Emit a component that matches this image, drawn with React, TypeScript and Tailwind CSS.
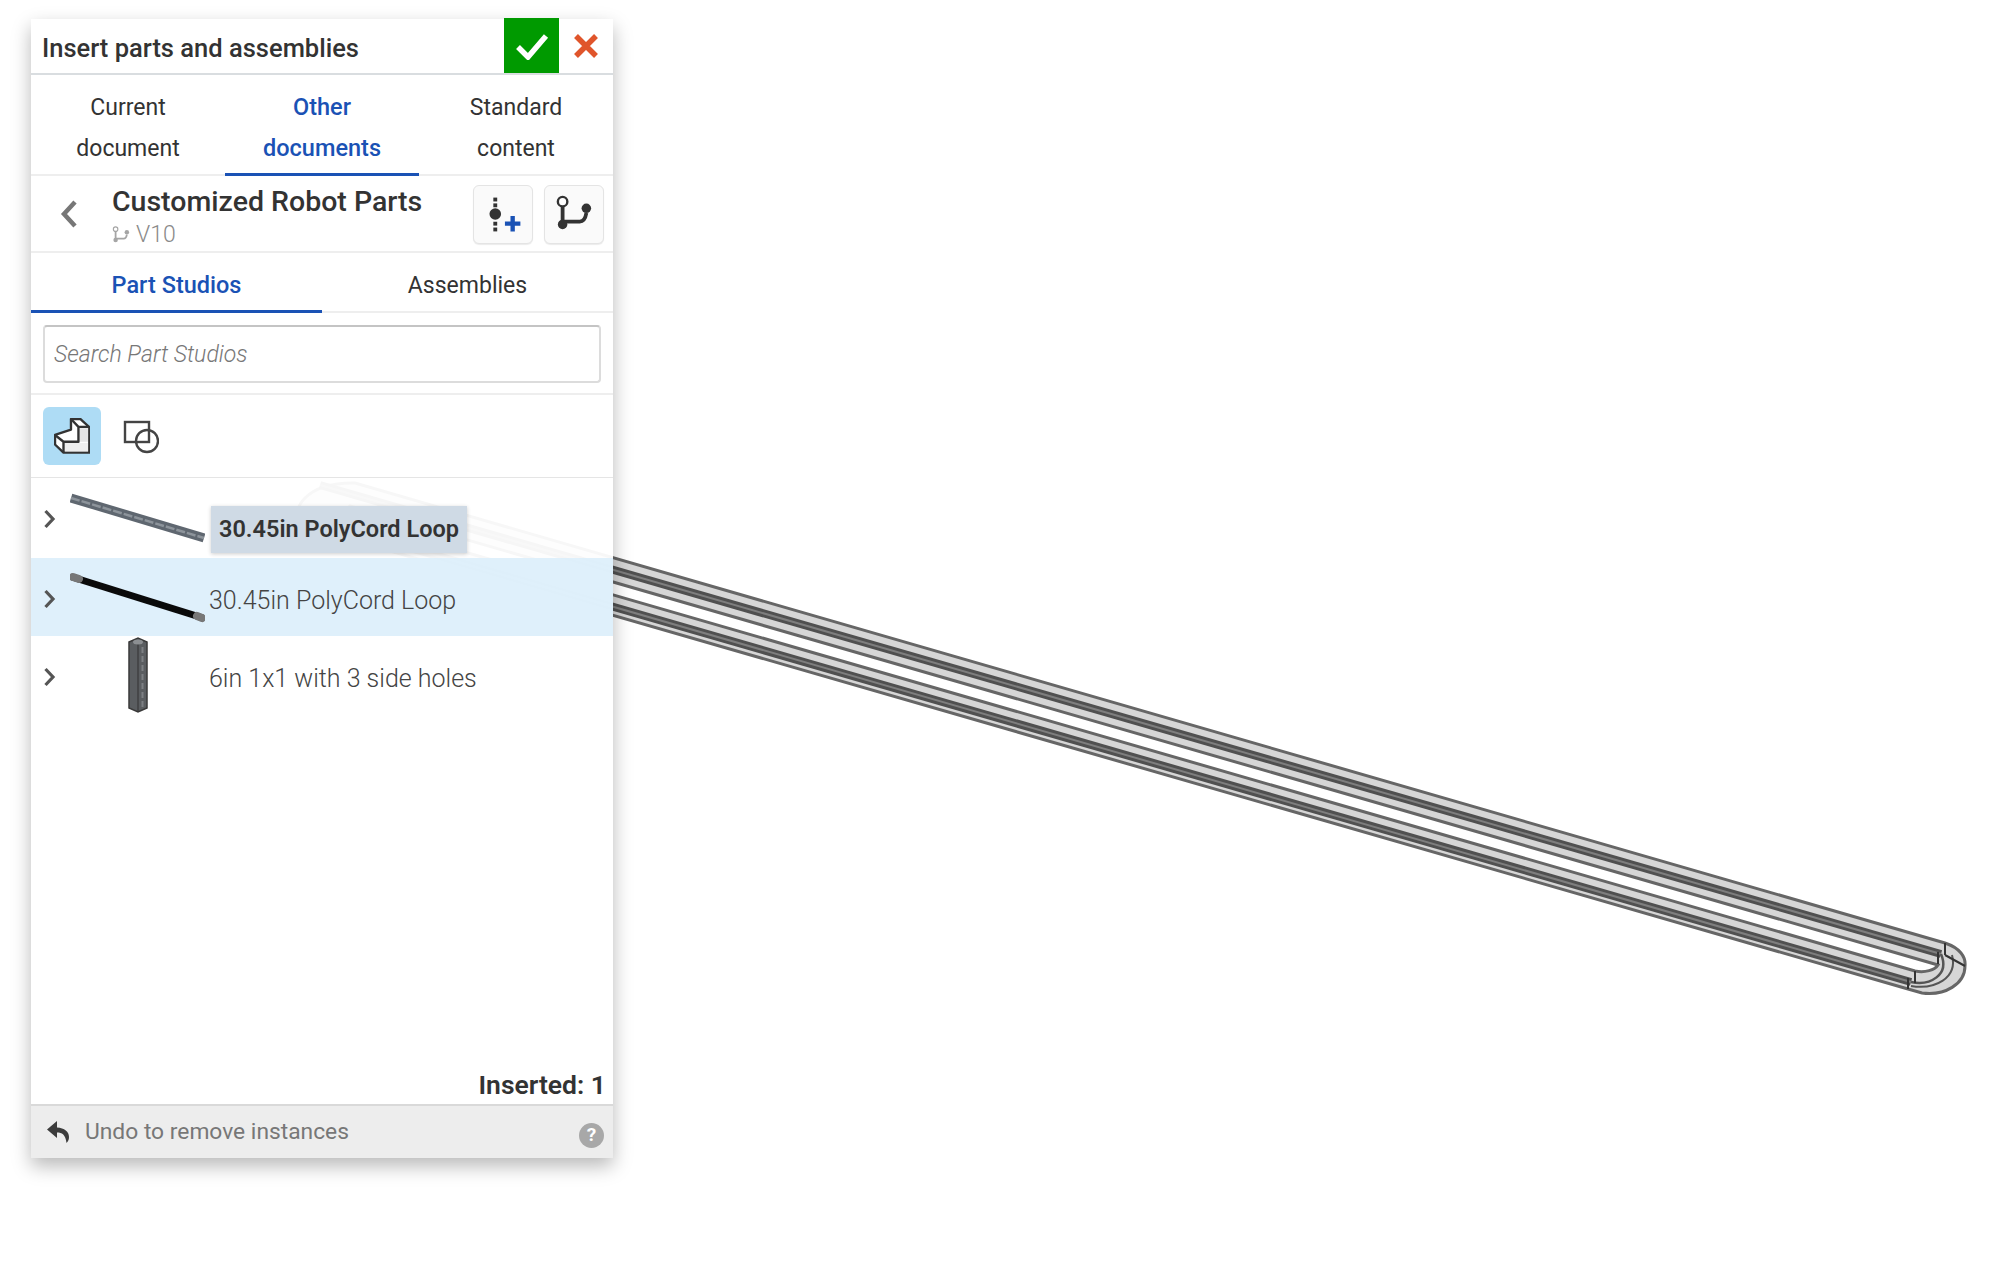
import React from "react";

const BLUE = "text-[#1a52b5]";

const Chevron = () => (
  <svg width="13" height="20" viewBox="0 0 13 20" fill="none">
    <path d="M2.5 2l7.5 8-7.5 8" stroke="#555" strokeWidth="3.2" />
  </svg>
);

const Branch = ({ stroke, size }: { stroke: string; size: number }) => (
  <svg width={size} height={size} viewBox="0 0 40 40" fill="none">
    <circle cx="8" cy="7" r="5" fill="#fff" stroke={stroke} strokeWidth="2.5" />
    <path d="M8 12v20M8 28h18c4 0 6-3 7-9" stroke={stroke} strokeWidth="4" />
    <circle cx="8" cy="31" r="5" fill={stroke} />
    <circle cx="33" cy="14" r="5" fill={stroke} />
  </svg>
);

const Robot = () => (
  <svg className="absolute inset-0" width="1999" height="1284" viewBox="0 0 1999 1284" fill="none">
    {/* the loop, it runs under the panel so it ghosts through */}
    <path
      d="M355 483L1945 943C1960 948 1966 957 1965 966C1965 984 1945 996 1922 993L1908 989L300 525C290 510 305 482 355 483Z"
      fill="#d6d6d6"
      stroke="#666"
      strokeWidth="3"
    />
    <path d="M340 516L1915 971C1925 973 1935 970 1938 965L350 506Z" fill="#fff" stroke="#666" strokeWidth="3" />
    <path d="M320 485L1941 954" stroke="#505050" strokeWidth="8" />
    <path d="M320 485L1941 954" stroke="#7e7e7e" strokeWidth="2" />
    <path d="M320 522L1911 982" stroke="#505050" strokeWidth="8" />
    <path d="M320 522L1911 982" stroke="#7e7e7e" strokeWidth="2" />
    <path d="M1911 982C1930 986 1950 975 1941 954" stroke="#555" strokeWidth="2.5" />
    <path d="M1911 986C1935 990 1958 978 1952 955" stroke="#555" strokeWidth="2" />
    <path d="M1945 943V955M1938 952V964M1915 971V983M1908 978V989M1945 955L1965 966" stroke="#333" strokeWidth="2" />
  </svg>
);

const StudioIcon = () => (
  <svg width="36" height="36" viewBox="0 0 106 106" fill="none" stroke="#333" strokeWidth="7" strokeLinejoin="round">
    <path d="M50 3H78L104 27V102H28L3 78V50L50 34Z" fill="#fff" />
    <path d="M32 73H100V98H32Z" fill="#eee" stroke="none" />
    <path d="M76 30H100V70H76Z" fill="#e4e4e4" stroke="none" />
    <path d="M28 102V70H72V26M72 26L50 3M72 26H104M28 70L3 50" />
  </svg>
);

const SketchIcon = () => (
  <svg width="36" height="36" viewBox="0 0 36 36" fill="none" stroke="#444" strokeWidth="2.4">
    <rect x="2" y="4" width="24" height="20" />
    <circle cx="24" cy="23" r="11" />
  </svg>
);

const Row = ({
  active,
  thumb,
  label,
}: {
  active?: boolean;
  thumb?: React.ReactNode;
  label?: string;
}) => (
  <div className={`flex items-center h-[78px] pl-[12px] ${active ? "bg-[#dceefb]/90" : ""}`}>
    <div className={`w-[27px] shrink-0 ${label ? "mt-[3px]" : ""}`}>
      <Chevron />
    </div>
    <div className="w-[135px] h-[78px] shrink-0 flex items-center justify-center">{thumb}</div>
    {label && <span className="ml-[4px] text-[25px] font-light text-[#444] relative top-[4px]">{label}</span>}
  </div>
);

export default function App() {
  return (
    <div className="relative min-h-screen bg-white pl-[31px] pt-[19px] [font-family:Roboto,sans-serif]">
      <Robot />
      <div className="relative flex flex-col w-[582px] h-[1139px] bg-white/95 shadow-[0_8px_18px_rgba(0,0,0,0.28)]">
        {/* header */}
        <div className="flex items-stretch h-[56px] bg-white border-b-2 border-[#d9dde0]">
          <div className="flex-1 flex items-center pl-[11px] pt-[4px] text-[25.5px] font-medium text-[#333]">
            Insert parts and assemblies
          </div>
          <button className="w-[55px] flex items-center justify-center bg-[#009a00] -mt-[1px]">
            <svg width="34" height="28" viewBox="0 0 34 28" fill="none">
              <path d="M3 15l10 10L31 4" stroke="#fff" strokeWidth="5.5" />
            </svg>
          </button>
          <button className="w-[54px] flex items-center justify-center">
            <svg width="26" height="26" viewBox="0 0 26 26" fill="none">
              <path d="M3 3l20 20M23 3L3 23" stroke="#e0552b" strokeWidth="5.5" />
            </svg>
          </button>
        </div>

        {/* source tabs */}
        <div className="grid grid-cols-3 h-[101px] bg-white border-b-2 border-[#eeeeee] text-[23px] leading-[41px] text-center text-[#333]">
          <div className="pt-[12px]">
            Current
            <br />
            document
          </div>
          <div className={`pt-[12px] text-[23.5px] font-medium ${BLUE} border-b-4 border-[#1a52b5] h-[102px]`}>
            Other
            <br />
            documents
          </div>
          <div className="pt-[12px]">
            Standard
            <br />
            content
          </div>
        </div>

        {/* document row */}
        <div className="flex items-center h-[77px] bg-white border-b-2 border-[#eeeeee] pl-[29px] pr-[9px]">
          <svg width="18" height="28" viewBox="0 0 18 28" fill="none">
            <path d="M15 2L4 14l11 12" stroke="#777" strokeWidth="4.5" />
          </svg>
          <div className="ml-[34px] flex-1 pt-[6px]">
            <div className="text-[28.5px] leading-[34px] font-medium text-[#333]">Customized Robot Parts</div>
            <div className="flex items-center gap-[6px] mt-[3px] text-[23px] leading-[26px] font-light text-[#8a8a8a]">
              <Branch stroke="#a5a5a5" size={18} />
              V10
            </div>
          </div>
          <div className="flex gap-[11px] mt-[1px]">
            <button className="w-[60px] h-[59px] rounded-[6px] bg-[#fafafa] border border-[#e4e4e4] shadow-[0_1px_1px_rgba(0,0,0,0.08)]">
              <svg width="58" height="57" viewBox="0 0 60 59">
                <rect x="20" y="12" width="4" height="4" fill="#333" />
                <rect x="20" y="18" width="4" height="4" fill="#333" />
                <circle cx="22" cy="29" r="6" fill="#333" />
                <rect x="20" y="37" width="4" height="4" fill="#333" />
                <rect x="20" y="43" width="4" height="4" fill="#333" />
                <path d="M40 31v16M32 39h16" stroke="#1a52b5" strokeWidth="4.5" />
              </svg>
            </button>
            <button className="w-[60px] h-[59px] rounded-[6px] bg-[#fafafa] border border-[#e4e4e4] shadow-[0_1px_1px_rgba(0,0,0,0.08)] flex items-center justify-center">
              <Branch stroke="#333" size={38} />
            </button>
          </div>
        </div>

        {/* studio / assembly tabs */}
        <div className="grid grid-cols-2 h-[60px] bg-white border-b-2 border-[#eeeeee] text-[23px] text-center">
          <div className={`flex items-center justify-center pt-[8px] text-[23.5px] font-medium ${BLUE} border-b-4 border-[#1a52b5] h-[61px]`}>
            Part Studios
          </div>
          <div className="flex items-center justify-center pt-[5px] text-[#333]">Assemblies</div>
        </div>

        {/* search */}
        <div className="h-[82px] bg-white border-b-2 border-[#eeeeee] px-[12px] pt-[12px]">
          <div className="h-[58px] rounded-[4px] border-2 border-[#dcdcdc] border-t-[#c4c4c4] flex items-center pl-[9px] pt-[3px] text-[23px] italic font-light text-[#777]">
            Search Part Studios
          </div>
        </div>

        {/* filters */}
        <div className="h-[83px] bg-white border-b border-[#e5e5e5] flex items-center pl-[12px] gap-[22px] shrink-0">
          <button className="w-[58px] h-[58px] rounded-[6px] bg-[#aedcf5] flex items-center justify-center">
            <StudioIcon />
          </button>
          <SketchIcon />
        </div>

        {/* list */}
        <div className="relative flex-1">
          <div className="h-[2px]" />
          <Row
            thumb={
              <svg width="135" height="78" viewBox="0 0 135 78" fill="none">
                <path d="M1 18L134 58" stroke="#5f6770" strokeWidth="9" />
                <path d="M1 18L134 58" stroke="#8d949b" strokeWidth="2.5" strokeDasharray="9 2" />
              </svg>
            }
          />
          <Row
            active
            label="30.45in PolyCord Loop"
            thumb={
              <svg width="135" height="78" viewBox="0 0 135 78" fill="none">
                <path d="M2 19L133 60" stroke="#0a0a0a" strokeWidth="7" />
                <path d="M3 19L9 21M127 58L132 60" stroke="#777" strokeWidth="8" strokeLinecap="round" />
              </svg>
            }
          />
          <Row
            label="6in 1x1 with 3 side holes"
            thumb={
              <svg width="22" height="76" viewBox="0 0 22 76" fill="none">
                <path d="M2 5L11 1L20 5V71L11 75L2 71Z" fill="#5a5d60" stroke="#3a3a3a" strokeWidth="1.5" />
                <path d="M11 7V75" stroke="#333" strokeWidth="1" />
                <path d="M15.5 10V70" stroke="#7d8083" strokeWidth="2" strokeDasharray="6 3" />
                <ellipse cx="11" cy="5" rx="5" ry="2.5" fill="#8c8f92" />
              </svg>
            }
          />

          {/* drag tooltip */}
          <div className="absolute left-[180px] top-[28px] w-[256px] h-[47px] bg-[#cfdae5] shadow-[0_1px_4px_rgba(0,0,0,0.2)] flex items-center justify-center pt-[1px] text-[23.5px] font-semibold text-[#333]">
            30.45in PolyCord Loop
          </div>

          <div className="absolute right-[7px] -bottom-[1px] text-[26.5px] font-semibold text-[#333]">Inserted: 1</div>
        </div>

        {/* footer */}
        <div className="flex items-center h-[54px] bg-[#ededed] border-t-2 border-[#d9d9d9] pl-[16px] pr-[9px] relative">
          <svg width="22" height="24" viewBox="0 0 22 24">
            <path
              d="M10 1L0 9.500 10 18v-5.500c5 0 8.500 2 9.500 10.500 2-2 2.500-4 2.500-6 0-5.500-4.500-9-12-9.500Z"
              fill="#3c3c3c"
            />
          </svg>
          <span className="ml-[16px] text-[22.8px] text-[#777]">Undo to remove instances</span>
          <div className="ml-auto mt-[7px] w-[25px] h-[25px] rounded-full bg-[#a8a8a8] flex items-center justify-center text-[19px] font-bold text-white">
            ?
          </div>
        </div>
      </div>
    </div>
  );
}
